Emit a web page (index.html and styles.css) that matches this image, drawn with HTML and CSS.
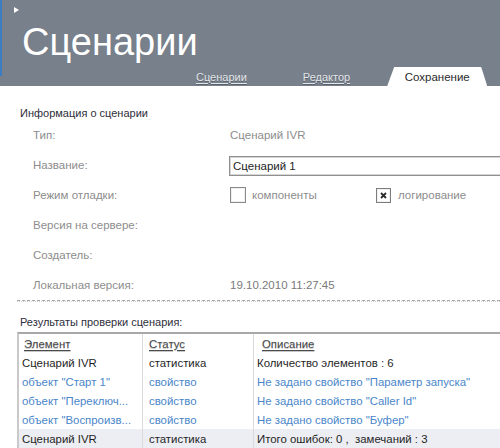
FILE: index.html
```html
<!DOCTYPE html>
<html lang="ru">
<head>
<meta charset="utf-8">
<title>Сценарии</title>
<link rel="stylesheet" href="styles.css">
</head>
<body>
<div class="page">
  <header class="header">
    <div class="tri"></div>
    <h1 class="title">Сценарии</h1>
    <nav class="tabs">
      <span class="tab">Сценарии</span>
      <span class="tab tab-2">Редактор</span>
      <span class="tab tab-active">Сохранение</span>
    </nav>
  </header>
  <main class="content">
    <div class="section-title">Информация о сценарии</div>
    <div class="row"><span class="label">Тип:</span><span class="value">Сценарий IVR</span></div>
    <div class="row"><span class="label">Название:</span><div class="input">Сценарий 1</div></div>
    <div class="row"><span class="label">Режим отладки:</span>
      <div class="checks">
        <span class="check-group"><span class="box"></span><span class="check-text">компоненты</span></span>
        <span class="check-group"><span class="box checked"><svg width="7" height="7" viewBox="0 0 7 7"><path d="M1 1L6 6M6 1L1 6" stroke="#2a2a2a" stroke-width="1.8"/></svg></span><span class="check-text">логирование</span></span>
      </div>
    </div>
    <div class="row"><span class="label">Версия на сервере:</span></div>
    <div class="row"><span class="label">Создатель:</span></div>
    <div class="row"><span class="label">Локальная версия:</span><span class="value date">19.10.2010 11:27:45</span></div>
    <div class="sep"></div>
    <div class="results-title">Результаты проверки сценария:</div>
    <div class="table">
      <div class="tr th">
        <div class="c1"><u>Элемент</u></div><div class="c2"><u>Статус</u></div><div class="c3"><u>Описание</u></div>
      </div>
      <div class="tr">
        <div class="c1">Сценарий IVR</div><div class="c2">статистика</div><div class="c3">Количество элементов : 6</div>
      </div>
      <div class="tr blue">
        <div class="c1">объект "Старт 1"</div><div class="c2">свойство</div><div class="c3">Не задано свойство "Параметр запуска"</div>
      </div>
      <div class="tr blue">
        <div class="c1">объект "Переключ...</div><div class="c2">свойство</div><div class="c3">Не задано свойство "Caller Id"</div>
      </div>
      <div class="tr blue">
        <div class="c1">объект "Воспроизв...</div><div class="c2">свойство</div><div class="c3">Не задано свойство "Буфер"</div>
      </div>
      <div class="tr sel">
        <div class="c1">Сценарий IVR</div><div class="c2">статистика</div><div class="c3">Итого ошибок: 0 ,&nbsp; замечаний : 3</div>
      </div>
    </div>
  </main>
</div>
</body>
</html>
```
FILE: styles.css
```css
* { box-sizing: border-box; }
html, body { margin: 0; padding: 0; background: #fff; }
body { width: 500px; height: 448px; overflow: hidden; font-family: "Liberation Sans", Arial, sans-serif; }
.page { width: 500px; }

.header {
  height: 86px;
  display: flex;
  flex-direction: column;
  padding-top: 7px;
  background: linear-gradient(#3b7dc0, #3b7dc0) no-repeat 0 0 / 2px 76px, #77808b;
}
.tri {
  width: 0; height: 0;
  margin-left: 14px;
  border-left: 5px solid #fff;
  border-top: 3px solid transparent;
  border-bottom: 3px solid transparent;
}
.title {
  margin: 10px 0 0 22px;
  font-weight: normal;
  font-size: 38px;
  line-height: 38px;
  color: #fff;
}
.tabs {
  margin-top: auto;
  height: 19px;
  display: flex;
  align-items: stretch;
  padding-left: 196px;
  font-size: 11px;
}
.tab {
  display: flex;
  align-items: center;
  color: #e3e6e9;
  text-decoration: underline;
  text-underline-offset: 2px;
  text-shadow: 0 1px 0 #5a626b;
}
.tab-2 { margin-left: 56px; }
.tab-active {
  margin-left: 37px;
  width: 100px;
  justify-content: center;
  background: #fff;
  color: #2b2b2b;
  text-decoration: none;
  text-shadow: none;
  font-size: 11.5px;
  clip-path: polygon(7px 0, calc(100% - 6px) 0, 100% 100%, 0 100%);
}

.content { padding: 20px 0 0 0; }
.section-title {
  margin-left: 20px;
  font-size: 11px;
  line-height: 14px;
  color: #2e2e3a;
}
.row {
  height: 30px;
  display: flex;
  align-items: center;
  font-size: 11.5px;
  color: #8d8d8d;
}
.label { width: 197px; margin-left: 33px; flex: none; }
.value { color: #8d8d8d; }
.date { color: #7a7a7a; }
.input {
  width: 290px;
  height: 20px;
  flex: none;
  margin-left: -1px;
  margin-top: 2px;
  padding-left: 3px;
  display: flex;
  align-items: center;
  border: 1px solid #8f8f8f;
  box-shadow: inset 0 0 0 1px #d6d6d6;
  color: #1e1e1e;
  font-size: 11.5px;
}
.checks { display: flex; align-items: center; }
.check-group { display: flex; align-items: center; }
.check-group:first-child { width: 146px; }
.box {
  width: 16px; height: 16px;
  border: 1px solid #8a8a8a;
  box-shadow: inset 0 0 0 1px #f0f0f0;
  background: #fff;
  display: flex;
  align-items: center;
  justify-content: center;
}
.checked { width: 15px; height: 15px; border-color: #7d7d7d; }
.check-text { margin-left: 6px; color: #8d8d8d; }
.check-group + .check-group .check-text { margin-left: 7px; }

.sep {
  margin: 0 0 0 17px;
  border-top: 1px dashed #a6a6a6;
  height: 2px;
  border-bottom: 1px dotted #d0d0d0;
}
.results-title {
  margin: 13px 0 0 20px;
  font-size: 11px;
  line-height: 14px;
  color: #2e2e3a;
}
.table {
  margin: 3px 0 0 17px;
  border-top: 2px solid #a8a8a8;
  border-left: 2px solid #c9c9c9;
  font-size: 11.4px;
}
.tr {
  display: flex;
  height: 19px;
  color: #1f1f1f;
}
.tr > div {
  display: flex;
  align-items: center;
  white-space: nowrap;
  overflow: hidden;
}
.c1 { width: 124px; padding-left: 3px; border-right: 1px solid #dadada; flex: none; }
.c2 { width: 111px; padding-left: 6px; border-right: 1px solid #dadada; flex: none; }
.c3 { flex: 1; padding-left: 3px; }
.th { color: #4a4a4a; text-shadow: 0 1px 0 #c8c8c8; }
.th .c1 { padding-left: 5px; }
.th .c3 { padding-left: 8px; }
.th u { text-underline-offset: 2px; }
.blue { color: #4a86c9; }
.sel { background: #eceef3; }
```
